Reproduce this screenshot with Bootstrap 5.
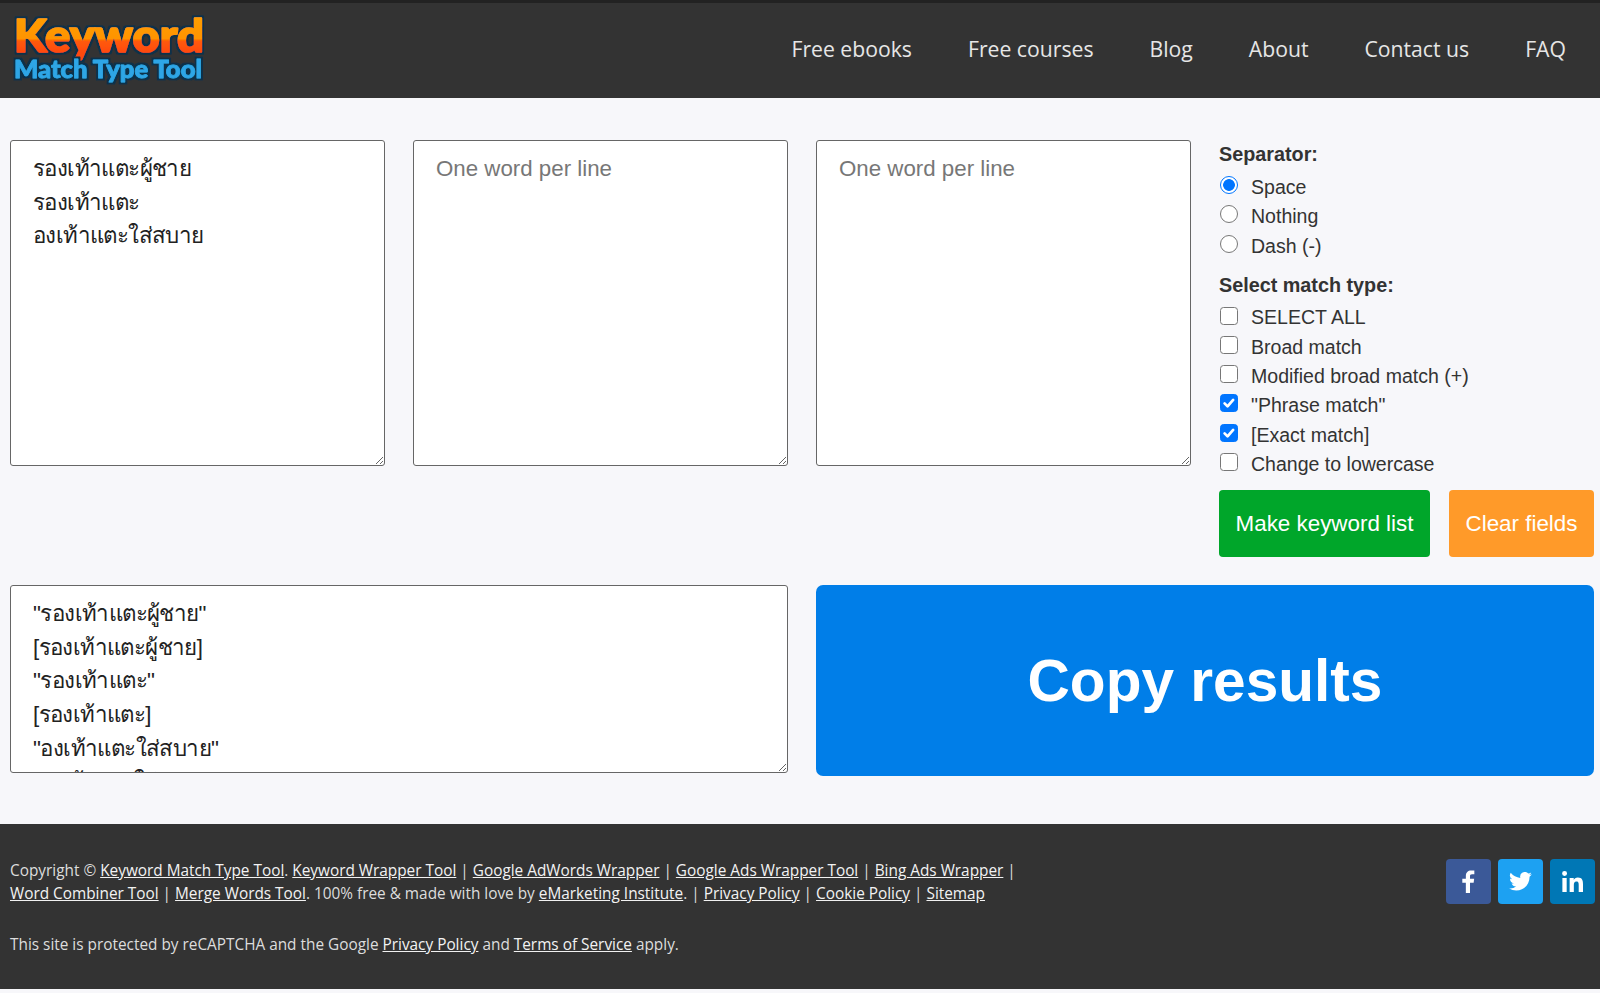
<!DOCTYPE html>
<html lang="en">
<head>
<meta charset="utf-8">
<title>Keyword Match Type Tool</title>
<link href="https://cdn.jsdelivr.net/npm/bootstrap@5.3.0/dist/css/bootstrap.min.css" rel="stylesheet">
<style>
html,body{height:100%}
body{background:#f7f7fa;font-family:"Liberation Sans","Noto Sans",Arial,sans-serif;color:#333;overflow:hidden}
.kw-nav{background:#333;border-top:3px solid #222;height:98px;padding:0 34px 0 10px}
.kw-logo{width:200px;height:95px;display:block;flex:none}
.kw-logo text{font-family:Lato,sans-serif;font-weight:900;stroke-linejoin:round}
.kw-links{gap:56px;margin-top:-4px}
.kw-links a{font-family:"Open Sans",sans-serif;font-size:21.2px;color:#e6e6e6;text-decoration:none}
.kw-main{padding:42px 6px 0 10px}
.kw-row{--bs-gutter-x:28px;--bs-gutter-y:0}
.kw-ta{display:block;width:100%;height:326px;border:1px solid #666;border-radius:3px;padding:11px 22px;font-size:22.3px;line-height:33.6px;color:#222;background:#fff;font-family:"Liberation Sans","Noto Sans",sans-serif;outline:0}
.kw-thai{letter-spacing:-.6px}
.kw-ta::placeholder{color:#777;letter-spacing:0}
.kw-out{height:188px;overflow:hidden}
.kw-head{font-weight:700;font-size:19.8px;line-height:29px;margin:0 0 4px;color:#333}
.kw-head2{margin:10.5px 0 3px}
.kw-opts{font-size:19.55px;line-height:29.3px;color:#333}
.kw-opt{display:flex;align-items:center;margin:0;min-height:29.3px;padding:0}
.kw-opt .form-check-input{width:18px;height:18px;margin:-5px 13.5px 0 .5px;flex:none;border-color:#777;float:none;box-shadow:none}
.kw-opt .form-check-input[type=checkbox]{border-radius:3.5px}
.kw-opt .form-check-input:checked{background-color:#0075ff;border-color:#0075ff}
.kw-opt .form-check-input[type=checkbox]:checked{background-image:url("data:image/svg+xml,%3csvg xmlns='http://www.w3.org/2000/svg' viewBox='0 0 20 20'%3e%3cpath fill='none' stroke='%23fff' stroke-linecap='round' stroke-linejoin='round' stroke-width='3.4' d='m4.500 10.500 3.700 3.700 7-8'/%3e%3c/svg%3e")}
.kw-opt .form-check-input[type=radio]:checked{background-color:#fff;background-image:radial-gradient(circle,#0075ff 0,#0075ff 5.500px,#fff 6.200px);border-width:1.500px}
.kw-btns{gap:19px;margin-top:10.5px;margin-right:-1px}
.kw-make,.kw-clear{height:67px;border:0;border-radius:4px;color:#fff;font-size:22.4px;padding:2px 0 0;text-align:center}
.kw-make{background:#00a62a;width:211px}
.kw-clear{background:#ff9a29;width:145px}
.kw-make:hover{background:#00a62a;color:#fff}
.kw-clear:hover{background:#ff9a29;color:#fff}
.kw-lower{margin-top:28.500px}
.kw-copy{background:#007ee8;color:#fff;font-weight:700;font-size:58.600px;height:191px;width:100%;border:0;border-radius:7px}
.kw-copy:hover{background:#007ee8;color:#fff}
.kw-foot{background:#333;height:165px;margin-top:47.5px;padding:35.5px 5px 0 10px;color:#ddd;font-family:"Open Sans",sans-serif;font-size:15.36px;line-height:23px}
.kw-foot a{color:#f2f2f2;text-decoration:underline}
.kw-foot p{margin:0}
.kw-recap{margin-top:28px!important}
.kw-copytext{width:1020px}
.kw-soc{gap:7px}
.kw-sb{width:45px;height:45px;border-radius:4px;display:flex;align-items:center;justify-content:center}
</style>
</head>
<body>
<nav class="kw-nav d-flex align-items-center justify-content-between">
  <svg class="kw-logo" viewBox="0 0 200 95" role="img" aria-label="Keyword Match Type Tool">
    <defs>
      <linearGradient id="kwg" gradientUnits="userSpaceOnUse" x1="0" y1="17" x2="0" y2="49"><stop offset="0" stop-color="#ff9d00"/><stop offset=".58" stop-color="#ff9400"/><stop offset=".66" stop-color="#ff5a08"/><stop offset="1" stop-color="#ff4a08"/></linearGradient>
      <filter id="kwo" x="-5%" y="-20%" width="110%" height="140%">
        <feMorphology in="SourceAlpha" operator="dilate" radius="2.2" result="d"/>
        <feFlood flood-color="#10304a"/>
        <feComposite in2="d" operator="in" result="o"/>
        <feMerge><feMergeNode in="o"/><feMergeNode in="SourceGraphic"/></feMerge>
      </filter>
    </defs>
    <text x="4" y="49" font-size="45" textLength="190" lengthAdjust="spacingAndGlyphs" fill="url(#kwg)" stroke="url(#kwg)" stroke-width="1.6" filter="url(#kwo)">Keyword</text>
    <text x="4" y="75" font-size="25" textLength="188" lengthAdjust="spacingAndGlyphs" fill="#2ea6e6" stroke="#2ea6e6" stroke-width=".8" filter="url(#kwo)">Match Type Tool</text>
  </svg>
  <div class="kw-links d-flex">
    <a href="#">Free ebooks</a><a href="#">Free courses</a><a href="#">Blog</a><a href="#">About</a><a href="#">Contact us</a><a href="#">FAQ</a>
  </div>
</nav>
<main class="kw-main">
  <div class="row kw-row">
    <div class="col-3"><textarea class="kw-ta kw-thai">รองเท้าแตะผู้ชาย
รองเท้าแตะ
องเท้าแตะใส่สบาย</textarea></div>
    <div class="col-3"><textarea class="kw-ta" placeholder="One word per line"></textarea></div>
    <div class="col-3"><textarea class="kw-ta" placeholder="One word per line"></textarea></div>
    <div class="col-3">
      <p class="kw-head">Separator:</p>
      <div class="kw-opts">
        <label class="kw-opt"><input class="form-check-input" type="radio" name="sep" checked>Space</label>
        <label class="kw-opt"><input class="form-check-input" type="radio" name="sep">Nothing</label>
        <label class="kw-opt"><input class="form-check-input" type="radio" name="sep">Dash (-)</label>
      </div>
      <p class="kw-head kw-head2">Select match type:</p>
      <div class="kw-opts">
        <label class="kw-opt"><input class="form-check-input" type="checkbox">SELECT ALL</label>
        <label class="kw-opt"><input class="form-check-input" type="checkbox">Broad match</label>
        <label class="kw-opt"><input class="form-check-input" type="checkbox">Modified broad match (+)</label>
        <label class="kw-opt"><input class="form-check-input" type="checkbox" checked>"Phrase match"</label>
        <label class="kw-opt"><input class="form-check-input" type="checkbox" checked>[Exact match]</label>
        <label class="kw-opt"><input class="form-check-input" type="checkbox">Change to lowercase</label>
      </div>
      <div class="kw-btns d-flex">
        <button class="btn kw-make" type="button">Make keyword list</button>
        <button class="btn kw-clear" type="button">Clear fields</button>
      </div>
    </div>
  </div>
  <div class="row kw-row kw-lower">
    <div class="col-6"><textarea class="kw-ta kw-out kw-thai">"รองเท้าแตะผู้ชาย"
[รองเท้าแตะผู้ชาย]
"รองเท้าแตะ"
[รองเท้าแตะ]
"องเท้าแตะใส่สบาย"
[องเท้าแตะใส่สบาย]</textarea></div>
    <div class="col-6"><button class="btn kw-copy" type="button">Copy results</button></div>
  </div>
</main>
<footer class="kw-foot d-flex justify-content-between align-items-start">
  <div class="kw-copytext">
    <p>Copyright © <a href="#">Keyword Match Type Tool</a>. <a href="#">Keyword Wrapper Tool</a> | <a href="#">Google AdWords Wrapper</a> | <a href="#">Google Ads Wrapper Tool</a> | <a href="#">Bing Ads Wrapper</a> | <a href="#">Word Combiner Tool</a> | <a href="#">Merge Words Tool</a>. 100% free &amp; made with love by <a href="#">eMarketing Institute</a>. | <a href="#">Privacy Policy</a> | <a href="#">Cookie Policy</a> | <a href="#">Sitemap</a></p>
    <p class="kw-recap">This site is protected by reCAPTCHA and the Google <a href="#">Privacy Policy</a> and <a href="#">Terms of Service</a> apply.</p>
  </div>
  <div class="kw-soc d-flex">
    <a class="kw-sb" href="#" style="background:#3b5998" aria-label="Facebook"><svg width="13" height="23" viewBox="0 0 14 26"><path fill="#fff" d="M4 26V14.500H0V10h4V6.700C4 2.600 6.400.5 10 .5c1.700 0 3.200.1 3.600.2v4.200h-2.500c-2 0-2.400.9-2.400 2.300V10h4.700l-.6 4.500H8.700V26z"/></svg></a>
    <a class="kw-sb" href="#" style="background:#1da1f2" aria-label="Twitter"><svg width="23" height="19" viewBox="0 0 24 20"><path fill="#fff" d="M24 2.400a9.800 9.800 0 0 1-2.800.8A4.900 4.900 0 0 0 23.300.5a9.800 9.800 0 0 1-3.100 1.200A4.900 4.900 0 0 0 11.800 6.200 14 14 0 0 1 1.700.9a4.900 4.900 0 0 0 1.500 6.600 4.900 4.900 0 0 1-2.200-.6v.1a4.900 4.900 0 0 0 3.900 4.800 4.900 4.900 0 0 1-2.200.1 4.900 4.900 0 0 0 4.600 3.400A9.900 9.900 0 0 1 0 17.300 13.900 13.900 0 0 0 7.500 19.500c9.100 0 14-7.500 14-14v-.6A10 10 0 0 0 24 2.400z"/></svg></a>
    <a class="kw-sb" href="#" style="background:#0077b5" aria-label="LinkedIn"><svg width="21" height="21" viewBox="0 0 22 22"><path fill="#fff" d="M.4 7.300h4.500V22H.4zM2.700 0a2.600 2.600 0 1 1 0 5.200 2.600 2.600 0 0 1 0-5.200zM8 7.300h4.300v2c.6-1.200 2.100-2.400 4.300-2.400 4.600 0 5.400 3 5.400 7V22h-4.500v-7.200c0-1.700 0-3.900-2.400-3.900s-2.700 1.900-2.700 3.800V22H8z"/></svg></a>
  </div>
</footer>
</body>
</html>
